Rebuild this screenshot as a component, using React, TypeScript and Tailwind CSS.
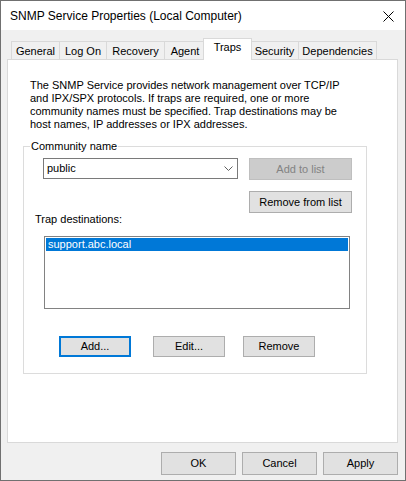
import React from 'react'

const tabs = ['General', 'Log On', 'Recovery', 'Agent', 'Traps', 'Security', 'Dependencies']
const tabWidths: Record<string, string> = {
  General: 'w-[48px]',
  'Log On': 'w-[47px]',
  Recovery: 'w-[58px]',
  Agent: 'w-[41px]',
  Traps: 'w-[49px]',
  Security: 'w-[48px]',
  Dependencies: 'w-[79px]',
}

const Button = ({ label, className = '' }: { label: string; className?: string }) => (
  <div
    className={`flex items-center justify-center bg-[#e1e1e1] border border-[#adadad] text-black ${className}`}
  >
    {label}
  </div>
)

const Tab = ({ label, active }: { label: string; active: boolean }) => {
  if (active) {
    return (
      <div
        className={`relative z-10 -mx-[2px] -mb-px h-[22px] ${tabWidths[label]} bg-white border border-b-0 border-[#d9d9d9] flex items-start justify-center pt-[2px]`}
      >
        {label}
      </div>
    )
  }
  return (
    <div
      className={`h-[18px] ${tabWidths[label]} bg-[#f0f0f0] border-t border-l border-[#d9d9d9] last:border-r flex items-center justify-center pt-[1px]`}
    >
      {label}
    </div>
  )
}

const App: React.FC = () => {
  return (
    <div className="w-[406px] h-[481px] border border-[#707070] bg-[#f0f0f0] flex flex-col font-['Liberation_Sans',Arial,sans-serif] text-[11px] leading-[13px] text-black overflow-hidden">
      {/* title bar */}
      <div className="h-[29px] bg-white flex items-center justify-between pl-[9px] pr-[11px] shrink-0">
        <span className="text-[12px] leading-[16px] pt-[1px]">SNMP Service Properties (Local Computer)</span>
        <svg width="11" height="11" viewBox="0 0 11 11" className="mt-[1px]">
          <path d="M0.5 0.5 L10.5 10.5 M10.5 0.5 L0.5 10.5" stroke="#000" strokeWidth="1" />
        </svg>
      </div>

      {/* tab strip */}
      <div className="pt-[8px] pl-[8px] shrink-0">
        <div className="flex items-end h-[21px] pl-[2px]">
          {tabs.map((t) => (
            <Tab key={t} label={t} active={t === 'Traps'} />
          ))}
        </div>
      </div>

      {/* tab page */}
      <div className="ml-[6px] w-[391px] h-[384px] bg-white border border-[#d9d9d9] shrink-0">
        <p className="pt-[19px] pl-[22px]">
          The SNMP Service provides network management over TCP/IP
          <br />
          and IPX/SPX protocols. If traps are required, one or more
          <br />
          community names must be specified. Trap destinations may be
          <br />
          host names, IP addresses or IPX addresses.
        </p>

        <fieldset className="mt-[9px] ml-[15px] w-[344px] border border-[#dcdcdc] pb-[16px]">
          <legend className="ml-[6px] px-[1px]">Community name</legend>

          <div className="flex items-start mt-[5px] pl-[19px]">
            <div className="w-[195px] h-[21px] border border-[#7a7a7a] bg-white flex items-center justify-between pl-[3px] pr-[4px]">
              <span>public</span>
              <svg width="9" height="5" viewBox="0 0 9 5">
                <path d="M0.5 0.5 L4.5 4.5 L8.5 0.5" fill="none" stroke="#606060" strokeWidth="1" />
              </svg>
            </div>
            <div className="ml-[11px] w-[103px] h-[22px] bg-[#cccccc] border border-[#bfbfbf] text-[#838383] flex items-center justify-center">
              Add to list
            </div>
          </div>

          <div className="flex mt-[11px] pl-[225px]">
            <Button label="Remove from list" className="w-[103px] h-[22px]" />
          </div>

          <div className="pl-[11px]">Trap destinations:</div>

          <div className="mt-[10px] ml-[20px] w-[306px] h-[73px] border border-[#828282] bg-white p-px">
            <div className="h-[13px] bg-[#0078d7] text-white pl-[2px] leading-[13px]">support.abc.local</div>
          </div>

          <div className="flex mt-[27px] pl-[35px] gap-[22px]">
            <div className="w-[72px] h-[21px] bg-[#e1e1e1] border-2 border-[#0078d7] flex items-center justify-center">
              Add...
            </div>
            <Button label="Edit..." className="w-[72px] h-[21px]" />
            <Button label="Remove" className="w-[72px] h-[21px] -ml-[4px]" />
          </div>
        </fieldset>
      </div>

      {/* dialog buttons */}
      <div className="flex justify-end gap-[6px] mt-[9px] pr-[7px] shrink-0">
        <Button label="OK" className="w-[75px] h-[23px]" />
        <Button label="Cancel" className="w-[75px] h-[23px]" />
        <Button label="Apply" className="w-[75px] h-[23px]" />
      </div>
    </div>
  )
}

export default App
